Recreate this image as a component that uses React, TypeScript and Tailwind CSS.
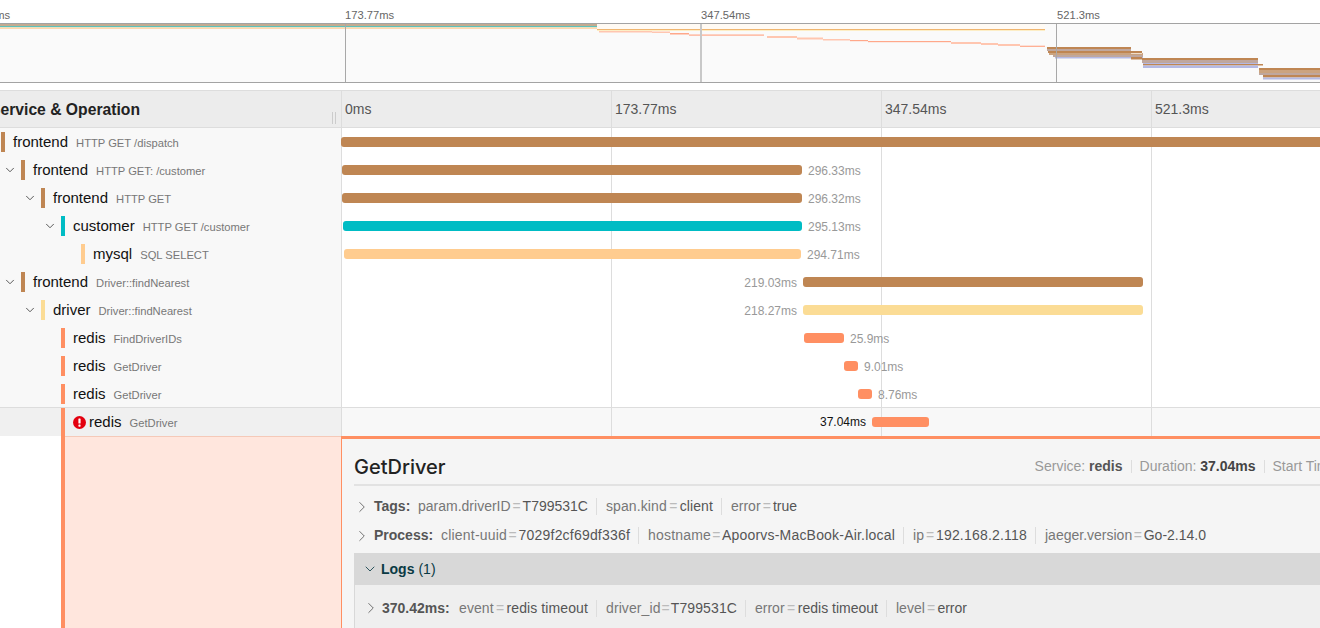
import React from 'react';
import {ChevronDown, ChevronRight} from "lucide-react";

const BROWN = "#bf8653"
const TAN = "#cba37f"
const LAVENDER = "#b4b9e4"
const MIXED = "#bfa79e"
const SALMON = "#ffa88a"
const PALE = "#ffc6b0"

// [x, y, width, height, colour], y is relative to the top of the minimap
const miniSpans: [number, number, number, number, string][] = [
    [0, 1, 597, 2, "#c4ab90"],
    [0, 3, 597, 1.3, "#5cc3bd"],
    [0, 4.3, 597, 1.7, "#ffd9ad"],
    [597, 1, 448, 5, "#fffaf3"],
    [597, 6, 448, 1, "#f0b56f"],
    [597, 7, 448, 1, "#fdeec6"],
    [599, 8, 53, 1.5, PALE],
    [652, 8.5, 18, 1.5, PALE],
    [670, 10, 19, 1.5, SALMON],
    [689, 11.5, 75, 1.2, SALMON],
    [767, 13, 30, 2, PALE],
    [797, 14.5, 26, 2, PALE],
    [823, 16, 27, 1.5, PALE],
    [850, 17, 18, 1.2, SALMON],
    [868, 18, 83, 1.2, SALMON],
    [951, 19, 30, 2, PALE],
    [981, 20, 17, 2, PALE],
    [998, 21, 22, 2, PALE],
    [1020, 22.7, 25, 1.2, SALMON],
    [1047, 24, 84, 2, BROWN],
    [1047, 26, 84, 2, MIXED],
    [1048, 28, 94, 2, BROWN],
    [1049, 30, 94, 2, TAN],
    [1053, 32, 90, 2, MIXED],
    [1055, 34, 88, 1.5, LAVENDER],
    [1131, 30, 11, 1, "#f0ddc9"],
    [1131, 34, 11, 2.5, BROWN],
    [1142, 35, 116, 2, BROWN],
    [1142, 37, 116, 3, MIXED],
    [1143, 40, 115, 1, LAVENDER],
    [1143, 41, 120, 1.5, BROWN],
    [1143, 42.5, 115, 2.5, LAVENDER],
    [1259, 45, 61, 2, BROWN],
    [1259, 47, 61, 3, TAN],
    [1259, 50, 61, 2, MIXED],
    [1263, 52, 57, 2.5, BROWN],
    [1263, 54.5, 57, 2, LAVENDER],
]

const Minimap = () => (
    <div className="h-[83px] shrink-0">
        <div className="flex h-[23px] -ml-[11px] pt-[8px] text-[11.2px] leading-[14px] text-[#666]">
            <span className="w-[356px] shrink-0">0ms</span>
            <span className="w-[356px] shrink-0">173.77ms</span>
            <span className="w-[356px] shrink-0">347.54ms</span>
            <span className="w-[200px] shrink-0">521.3ms</span>
        </div>
        <svg width="1320" height="60" viewBox="0 0 1320 60" className="block">
            <rect x="0" y="0" width="1320" height="60" fill="#fafafa"/>
            {miniSpans.map(([x, y, w, h, fill], i) => (
                <rect key={i} x={x} y={y} width={w} height={h} fill={fill}/>
            ))}
            <rect x="345" y="0" width="1" height="60" fill="#a8a8a8"/>
            <rect x="700" y="0" width="2" height="60" fill="#c8c8c8"/>
            <rect x="1056" y="0" width="1" height="60" fill="#a8a8a8"/>
            <rect x="0" y="0" width="1320" height="1" fill="#a3a3a3"/>
            <rect x="0" y="59" width="1320" height="1" fill="#a3a3a3"/>
        </svg>
    </div>
)

const Ticks = () => (
    <>
        <div className="absolute inset-y-0 left-[269px] w-px bg-[#ddd]"/>
        <div className="absolute inset-y-0 left-[539px] w-px bg-[#ddd]"/>
        <div className="absolute inset-y-0 left-[809px] w-px bg-[#ddd]"/>
    </>
)

const Header = () => (
    <div className="flex h-[38px] shrink-0 border-y border-[#ddd] bg-[#ececec]">
        <div className="relative flex w-[342px] shrink-0 items-center border-r border-[#ddd]">
            <span className="-ml-[10px] pt-px text-[15.7px] font-bold text-[#222]">Service &amp; Operation</span>
            <div className="absolute right-[5px] top-[21px] h-[12px] w-[4px] border-x border-[#ccc]"/>
        </div>
        <div className="flex flex-1 items-center text-[14px] text-[#555]">
            <span className="w-[269px] shrink-0 pl-[3px]">0ms</span>
            <span className="w-[270px] shrink-0 border-l border-[#ddd] h-full flex items-center pl-[3px]">173.77ms</span>
            <span className="w-[270px] shrink-0 border-l border-[#ddd] h-full flex items-center pl-[3px]">347.54ms</span>
            <span className="w-[270px] shrink-0 border-l border-[#ddd] h-full flex items-center pl-[3px]">521.3ms</span>
        </div>
    </div>
)

interface Row {
    indent: string;
    chevron?: boolean;
    service: string;
    op: string;
    color: string;
    bar: string;
    label: string;
    labelLeft?: string;
}

const rows: Row[] = [
    {indent: "w-0", service: "frontend", op: "HTTP GET /dispatch", color: "bg-[#bf8653]", bar: "-ml-px w-[1000px] bg-[#bf8653]", label: ""},
    {indent: "w-[20px]", chevron: true, service: "frontend", op: "HTTP GET: /customer", color: "bg-[#bf8653]", bar: "w-[460px] bg-[#bf8653]", label: "296.33ms"},
    {indent: "w-[40px]", chevron: true, service: "frontend", op: "HTTP GET", color: "bg-[#bf8653]", bar: "w-[460px] bg-[#bf8653]", label: "296.32ms"},
    {indent: "w-[60px]", chevron: true, service: "customer", op: "HTTP GET /customer", color: "bg-[#00bcc4]", bar: "ml-px w-[459px] bg-[#00bcc4]", label: "295.13ms"},
    {indent: "w-[80px]", service: "mysql", op: "SQL SELECT", color: "bg-[#ffcc8f]", bar: "ml-[2px] w-[457px] bg-[#ffcc8f]", label: "294.71ms"},
    {indent: "w-[20px]", chevron: true, service: "frontend", op: "Driver::findNearest", color: "bg-[#bf8653]", bar: "w-[340px] bg-[#bf8653]", label: "", labelLeft: "219.03ms"},
    {indent: "w-[40px]", chevron: true, service: "driver", op: "Driver::findNearest", color: "bg-[#fbdc95]", bar: "w-[340px] bg-[#fbdc95]", label: "", labelLeft: "218.27ms"},
    {indent: "w-[60px]", service: "redis", op: "FindDriverIDs", color: "bg-[#ff8f62]", bar: "ml-[462px] w-[40px] bg-[#ff8f62]", label: "25.9ms"},
    {indent: "w-[60px]", service: "redis", op: "GetDriver", color: "bg-[#ff8f62]", bar: "ml-[502px] w-[14px] bg-[#ff8f62]", label: "9.01ms"},
    {indent: "w-[60px]", service: "redis", op: "GetDriver", color: "bg-[#ff8f62]", bar: "ml-[516px] w-[14px] bg-[#ff8f62]", label: "8.76ms"},
]

const SpanRow = ({row}: { row: Row }) => (
    <div className="flex h-7 shrink-0">
        <div className="flex w-[342px] shrink-0 items-center border-r border-[#ddd] bg-[#f8f8f8] pl-px">
            <div className={`flex shrink-0 justify-end ${row.indent}`}>
                {row.chevron && <ChevronDown size={14} strokeWidth={1.5} className="mr-1 text-[#444]"/>}
            </div>
            <div className={`h-5 w-1 shrink-0 ${row.color}`}/>
            <span className="ml-2 text-[15px] text-[#111]">{row.service}</span>
            <span className="ml-2 mt-[2px] text-[11.2px] text-[#777]">{row.op}</span>
        </div>
        <div className="relative flex flex-1 items-center">
            <Ticks/>
            {row.labelLeft && <span className="relative mt-px w-[455px] text-right text-[12px] text-[#999]">{row.labelLeft}</span>}
            <div className={`relative h-[10px] shrink-0 rounded-[3px] ${row.labelLeft ? "ml-[6px] " : ""}${row.bar}`}/>
            {row.label && <span className="relative ml-[6px] mt-px text-[12px] text-[#999]">{row.label}</span>}
        </div>
    </div>
)

const SelectedRow = () => (
    <div className="flex h-[29px] -mt-px shrink-0 border-t border-[#ddd]">
        <div className="flex w-[342px] shrink-0 items-center border-r border-[#ddd] bg-[#f0f0f0] pl-px">
            <div className="w-[60px] shrink-0"/>
            <div className="h-full w-1 shrink-0 bg-[#ff8f62]"/>
            <svg width="13" height="13" viewBox="0 0 13 13" className="ml-2 shrink-0">
                <circle cx="6.5" cy="6.5" r="6.5" fill="#e3000f"/>
                <rect x="5.4" y="2.4" width="2.2" height="5.2" rx="0.6" fill="#fff"/>
                <rect x="5.4" y="8.6" width="2.2" height="2.1" rx="0.6" fill="#fff"/>
            </svg>
            <span className="ml-[3px] text-[15px] text-[#111]">redis</span>
            <span className="ml-2 mt-[2px] text-[11.2px] text-[#777]">GetDriver</span>
        </div>
        <div className="relative flex flex-1 items-center bg-[#f8f8f8]">
            <Ticks/>
            <span className="relative w-[524px] text-right text-[12px] text-[#111]">37.04ms</span>
            <div className="relative ml-[6px] h-[10px] w-[57px] shrink-0 rounded-[3px] bg-[#ff8f62]"/>
        </div>
    </div>
)

const KeyValue = ({k, v, width, first}: { k: string; v: string; width: string; first?: boolean }) => (
    <span className={`flex h-[17px] items-center whitespace-nowrap ${first ? "" : "ml-[8px] border-l border-[#ddd] pl-[9px]"}`}>
        <span className={`flex justify-between ${width}`}>
            <span className="text-[#777]">{k}</span>
            <span className="text-[#bbb]">=</span>
            <span className="text-[#555]">{v}</span>
        </span>
    </span>
)

const Detail = () => (
    <div className="flex min-h-0 flex-1">
        <div className="flex w-[342px] shrink-0 border-r border-[#ddd] bg-white">
            <div className="w-[61px] shrink-0"/>
            <div className="w-1 shrink-0 bg-[#ff8f62]"/>
            <div className="flex-1 border-t border-[#f5c9b8] bg-[#ffe6dd]"/>
        </div>
        <div className="flex-1 -ml-px border-l border-[#ff8f62] border-t-[3px] border-t-[#ff8f62] bg-[#f5f5f5] pl-[12px] text-[14px] whitespace-nowrap overflow-hidden">
            <div className="flex h-[47px] items-center border-b-2 border-[#e2e2e2] pt-[10px]">
                <h2 className="w-[93px] font-['Inter',sans-serif] text-[20px] font-medium text-[#222]">GetDriver</h2>
                <div className="ml-[589px] flex items-center text-[#999]">
                    <span>Service: <b className="text-[#555]">redis</b></span>
                    <span className="ml-[8px] h-[13px] border-l border-[#ddd]"/>
                    <span className="ml-[8px]">Duration: <b className="text-[#444]">37.04ms</b></span>
                    <span className="ml-[8px] h-[13px] border-l border-[#ddd]"/>
                    <span className="ml-[8px]">Start Time: <b className="text-[#444]">370.42ms</b></span>
                </div>
            </div>
            <div className="flex h-[29px] mt-[6px] items-center">
                <ChevronRight size={18} strokeWidth={1.1} className="-ml-px shrink-0 text-[#555]"/>
                <b className="ml-[3px] w-[44px] shrink-0 text-[#555]">Tags:</b>
                <span className="flex items-center">
                    <KeyValue first width="w-[170px]" k="param.driverID" v="T799531C"/>
                    <KeyValue width="w-[107px] tracking-[0.1px]" k="span.kind" v="client"/>
                    <KeyValue width="w-[66px]" k="error" v="true"/>
                </span>
            </div>
            <div className="flex h-[29px] items-center">
                <ChevronRight size={18} strokeWidth={1.1} className="-ml-px shrink-0 text-[#555]"/>
                <b className="ml-[3px] w-[67px] shrink-0 text-[#555]">Process:</b>
                <span className="flex items-center">
                    <KeyValue first width="w-[189px] tracking-[0.2px]" k="client-uuid" v="7029f2cf69df336f"/>
                    <KeyValue width="w-[247px] tracking-[0.2px]" k="hostname" v="Apoorvs-MacBook-Air.local"/>
                    <KeyValue width="w-[114px] tracking-[0.2px]" k="ip" v="192.168.2.118"/>
                    <KeyValue width="w-[161px]" k="jaeger.version" v="Go-2.14.0"/>
                </span>
            </div>
            <div className="mt-[3px] flex h-[32px] items-center bg-[#d8d8d8]">
                <ChevronDown size={16} strokeWidth={1.25} className="ml-[8px] shrink-0 text-[#0a3a44]"/>
                <b className="ml-[3px] text-[#0a3a44]">Logs</b>
                <span className="ml-1 text-[#0a3a44]">(1)</span>
            </div>
            <div className="flex h-[46px] items-center border-l border-[#d8d8d8] bg-[#efefef]">
                <ChevronRight size={18} strokeWidth={1.1} className="ml-[7px] shrink-0 text-[#555]"/>
                <b className="ml-[2px] w-[77px] shrink-0 text-[#555]">370.42ms:</b>
                <span className="flex items-center">
                    <KeyValue first width="w-[129px] tracking-[0.1px]" k="event" v="redis timeout"/>
                    <KeyValue width="w-[131px] tracking-[0.1px]" k="driver_id" v="T799531C"/>
                    <KeyValue width="w-[123px]" k="error" v="redis timeout"/>
                    <KeyValue width="w-[71px]" k="level" v="error"/>
                </span>
            </div>
        </div>
    </div>
)

const App = () => {
    return (
        <div className="flex h-[628px] w-[1320px] flex-col overflow-hidden bg-white font-['Liberation_Sans',Arial,sans-serif]">
            <Minimap/>
            <div className="h-[7px] shrink-0"/>
            <Header/>
            {rows.map((row, i) => <SpanRow key={i} row={row}/>)}
            <SelectedRow/>
            <Detail/>
        </div>
    );
};

export default App;
